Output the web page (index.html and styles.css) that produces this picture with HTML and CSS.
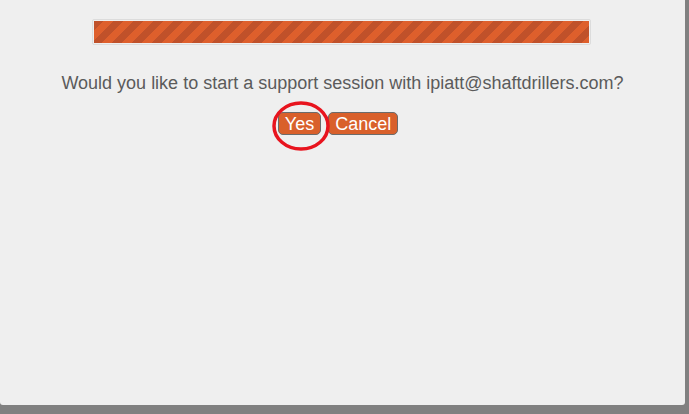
FILE: index.html
```html
<!DOCTYPE html>
<html lang="en">
<head>
    <meta charset="UTF-8">
    <title>Support Session</title>
    <link rel="stylesheet" href="styles.css">
</head>
<body>
    <div class="panel">
        <div class="progress">
            <div class="progress-bar"></div>
        </div>
        <p class="message">Would you like to start a support session with ipiatt@shaftdrillers.com?</p>
        <div class="actions">
            <span class="yes-wrap">
                <button class="btn">Yes</button>
                <svg class="circle-mark" width="60" height="52" viewBox="0 0 60 52">
                    <ellipse cx="30" cy="26" rx="27" ry="23" fill="none" stroke="#e8141e" stroke-width="3.5"/>
                </svg>
            </span>
            <button class="btn">Cancel</button>
        </div>
    </div>
</body>
</html>
```

FILE: styles.css
```css
body {
    margin: 0;
    background: #808080;
    font-family: "Liberation Sans", Arial, sans-serif;
    height: 100vh;
    overflow: hidden;
}

.panel {
    width: 685px;
    height: 405px;
    background: #efefef;
    border-radius: 0 0 3px 3px;
    padding-top: 19px;
    box-sizing: border-box;
}

.progress {
    width: 499px;
    height: 26px;
    margin: 0 0 0 92px;
    border: 1px solid #dcdcdc;
    border-radius: 2px;
    box-sizing: border-box;
    padding: 1px;
    background: #efefef;
}

.progress-bar {
    height: 100%;
    background-color: #de5f2c;
    background-image: linear-gradient(135deg, #c0512a 25%, transparent 25%, transparent 50%, #c0512a 50%, #c0512a 75%, transparent 75%, transparent);
    background-size: 20px 20px;
}

.message {
    margin: 27px 0 0;
    text-align: center;
    font-size: 18px;
    color: #5b5b5b;
    line-height: 22px;
}

.actions {
    display: flex;
    justify-content: center;
    gap: 7px;
    margin-top: 18px;
    padding-right: 9px;
}

.yes-wrap {
    position: relative;
    display: inline-flex;
}

.btn {
    font-family: "Liberation Sans", Arial, sans-serif;
    font-size: 18px;
    color: #fff;
    background: #d9602b;
    border: 1px solid #6b6b6b;
    border-radius: 5px;
    height: 23px;
    padding: 0 6px;
    line-height: 20px;
}

.circle-mark {
    position: absolute;
    left: -7px;
    top: -12px;
    pointer-events: none;
}
```
